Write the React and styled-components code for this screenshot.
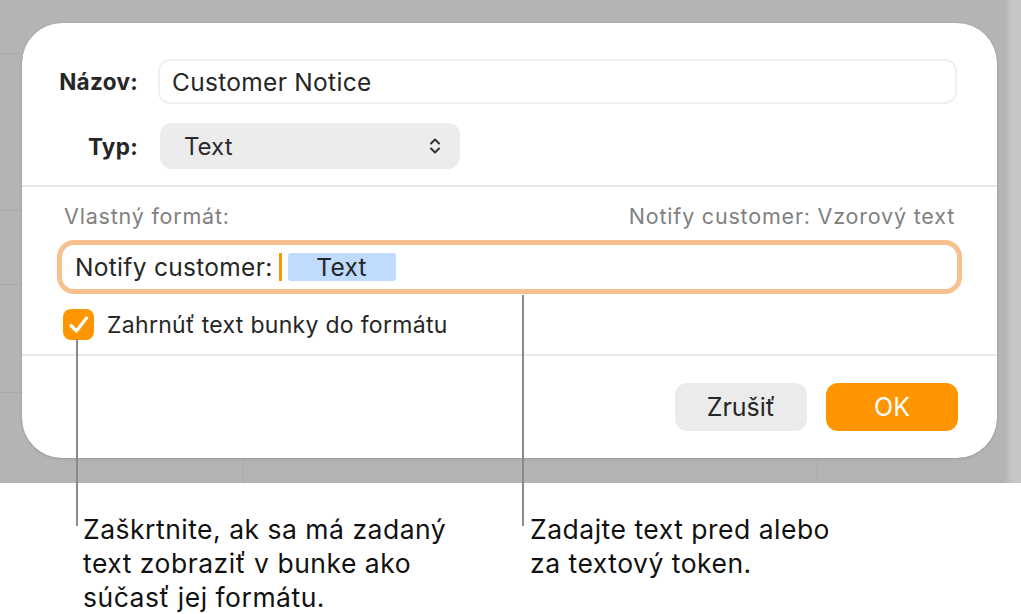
import styled, { createGlobalStyle } from "styled-components";

const GlobalStyle = createGlobalStyle`
  html, body {
    margin: 0;
    padding: 0;
    background: #ffffff;
  }
  body {
    font-family: "Inter", "Liberation Sans", sans-serif;
    color: #262626;
  }
`;

const ChevronsIcon = () => (
  <svg width="14" height="20" viewBox="0 0 14 20" fill="none">
    <path d="M3 7.5 L7 3.5 L11 7.5" stroke="#333" strokeWidth="2" strokeLinecap="round" strokeLinejoin="round" />
    <path d="M3 12.5 L7 16.5 L11 12.5" stroke="#333" strokeWidth="2" strokeLinecap="round" strokeLinejoin="round" />
  </svg>
);

const CheckIcon = () => (
  <svg width="24" height="22" viewBox="0 0 24 22" fill="none">
    <path d="M4 11.5 L9.5 17 L19.5 4" stroke="#fff" strokeWidth="3.2" strokeLinecap="round" strokeLinejoin="round" />
  </svg>
);

const App = () => {
  return (
    <Page>
      <GlobalStyle />
      <Backdrop>
        <Dialog>
          <TopForm>
            <FieldRow>
              <Label>Názov:</Label>
              <NameInput>Customer Notice</NameInput>
            </FieldRow>
            <FieldRow>
              <Label>Typ:</Label>
              <Popup>
                <span>Text</span>
                <ChevronsIcon />
              </Popup>
            </FieldRow>
          </TopForm>
          <Divider />
          <FormatSection>
            <FormatHeader>
              <span>Vlastný formát:</span>
              <span>Notify customer: Vzorový text</span>
            </FormatHeader>
            <FormatField>
              <span>Notify customer:</span>
              <Caret />
              <Token>Text</Token>
            </FormatField>
            <CheckRow>
              <CheckBox>
                <CheckIcon />
              </CheckBox>
              <span>Zahrnúť text bunky do formátu</span>
            </CheckRow>
          </FormatSection>
          <Divider />
          <Footer>
            <Button>Zrušiť</Button>
            <Button $primary>OK</Button>
          </Footer>
        </Dialog>
      </Backdrop>
      <Callouts>
        <Callout $width="385px">
          Zaškrtnite, ak sa má zadaný text zobraziť v bunke ako súčasť jej formátu.
        </Callout>
        <Callout $width="320px">Zadajte text pred alebo za textový token.</Callout>
      </Callouts>
      <Leader $left="76px" $top="339px" $height="187px" />
      <Leader $left="522px" $top="295px" $height="231px" />
    </Page>
  );
};

const Page = styled.div`
  position: relative;
  width: 1021px;
  height: 614px;
  overflow: hidden;
  background: #fff;
`;

const Backdrop = styled.div`
  height: 483px;
  box-sizing: border-box;
  padding: 23px 24px 25px 22px;
  background:
    linear-gradient(#a9a9a9, #a9a9a9) 0 53px / 22px 1px no-repeat,
    linear-gradient(#a9a9a9, #a9a9a9) 0 210px / 22px 1px no-repeat,
    linear-gradient(#a9a9a9, #a9a9a9) 0 284px / 22px 1px no-repeat,
    linear-gradient(#a9a9a9, #a9a9a9) 0 392px / 22px 1px no-repeat,
    linear-gradient(#a9a9a9, #a9a9a9) 243px 458px / 1px 25px no-repeat,
    linear-gradient(#a9a9a9, #a9a9a9) 817px 458px / 1px 25px no-repeat,
    linear-gradient(to right, #b4b4b4 0, #b4b4b4 1005px, #c6c6c6 1012px, #c6c6c6 100%),
    #b4b4b4;
`;

const Dialog = styled.div`
  height: 435px;
  background: #fff;
  border-radius: 40px;
  box-shadow: 0 0 1px rgba(0, 0, 0, 0.25), 0 1px 3px rgba(0, 0, 0, 0.12);
  display: flex;
  flex-direction: column;
`;

const TopForm = styled.div`
  display: flex;
  flex-direction: column;
  gap: 19px;
  padding: 36px 40px 16px 0;
`;

const FieldRow = styled.div`
  display: flex;
  align-items: center;
  gap: 20px;
`;

const Label = styled.div`
  width: 116px;
  text-align: right;
  font-size: 22.5px;
  font-weight: 700;
  letter-spacing: 0.3px;
  color: #262626;
`;

const NameInput = styled.div`
  flex: 1;
  height: 45px;
  box-sizing: border-box;
  border: 2px solid #f0f0f0;
  border-radius: 12px;
  display: flex;
  align-items: center;
  padding-left: 12px;
  font-size: 24.5px;
  letter-spacing: 0.3px;
  color: #262626;
`;

const Popup = styled.div`
  width: 300px;
  height: 46px;
  margin-left: 2px;
  box-sizing: border-box;
  background: #ececec;
  border-radius: 12px;
  display: flex;
  align-items: center;
  justify-content: space-between;
  padding: 0 18px 0 24px;
  font-size: 24px;
  color: #2b2b2b;
`;

const Divider = styled.div`
  height: 2px;
  background: #e8e8e8;
`;

const FormatSection = styled.div`
  display: flex;
  flex-direction: column;
  padding: 14px 35px 14px 35px;
`;

const FormatHeader = styled.div`
  display: flex;
  justify-content: space-between;
  height: 30px;
  align-items: center;
  padding: 0 7px;
  font-size: 21.5px;
  letter-spacing: 0.8px;
  color: #808080;
`;

const FormatField = styled.div`
  margin-top: 9px;
  height: 54px;
  box-sizing: border-box;
  border: 5px solid #f7c08f;
  border-radius: 17px;
  display: flex;
  align-items: center;
  padding-left: 13px;
  font-size: 24.5px;
  letter-spacing: 0.3px;
  color: #262626;
`;

const Caret = styled.div`
  width: 3px;
  height: 28px;
  background: #ff9500;
  margin-left: 6px;
`;

const Token = styled.div`
  margin-left: 6px;
  width: 108px;
  height: 28px;
  background: #bfdcff;
  border-radius: 3px;
  display: flex;
  align-items: center;
  justify-content: center;
  font-size: 24.5px;
`;

const CheckRow = styled.div`
  margin-top: 15px;
  margin-left: 6px;
  display: flex;
  align-items: center;
  gap: 13px;
  font-size: 23px;
  letter-spacing: 0.3px;
  color: #262626;
`;

const CheckBox = styled.div`
  width: 31px;
  height: 31px;
  border-radius: 8px;
  background: #ff9500;
  display: flex;
  align-items: center;
  justify-content: center;
`;

const Footer = styled.div`
  display: flex;
  justify-content: flex-end;
  gap: 19px;
  padding: 27px 39px 0 0;
`;

const Button = styled.div`
  width: 132px;
  height: 48px;
  border-radius: 12px;
  background: ${(p) => (p.$primary ? "#ff9500" : "#ebebeb")};
  color: ${(p) => (p.$primary ? "#ffffff" : "#262626")};
  display: flex;
  align-items: center;
  justify-content: center;
  font-size: 25px;
  font-weight: 400;
`;

const Callouts = styled.div`
  display: flex;
  padding: 29px 0 0 83px;
  gap: 62px;
`;

const Callout = styled.p`
  margin: 0;
  width: ${(p) => p.$width};
  font-size: 26.5px;
  line-height: 34px;
  letter-spacing: 0.5px;
  color: #111;
`;

const Leader = styled.div`
  position: absolute;
  left: ${(p) => p.$left};
  top: ${(p) => p.$top};
  width: 2px;
  height: ${(p) => p.$height};
  background: #8a8a8a;
`;

export default App;
